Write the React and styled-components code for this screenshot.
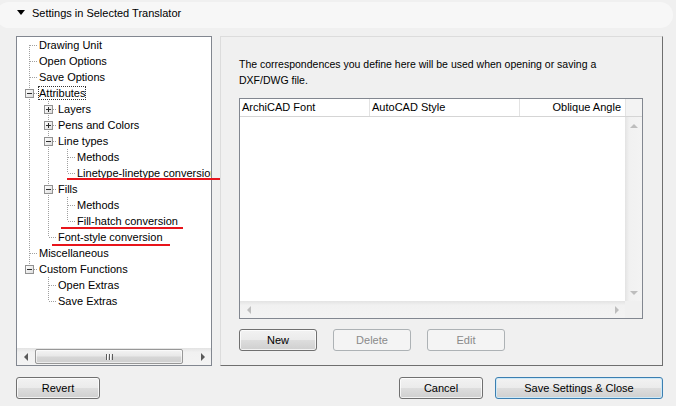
import styled, { createGlobalStyle, css } from "styled-components";

const GlobalStyle = createGlobalStyle`
  body {
    margin: 0;
    background: #f0f0f0;
    font-family: "Liberation Sans", Arial, sans-serif;
    font-size: 11px;
    color: #000;
  }
`;

const TREE = [
  { label: "Drawing Unit" },
  { label: "Open Options" },
  { label: "Save Options" },
  {
    label: "Attributes",
    focused: true,
    open: true,
    children: [
      { label: "Layers", collapsed: true },
      { label: "Pens and Colors", collapsed: true },
      {
        label: "Line types",
        open: true,
        children: [{ label: "Methods" }, { label: "Linetype-linetype conversion" }],
      },
      {
        label: "Fills",
        open: true,
        children: [{ label: "Methods" }, { label: "Fill-hatch conversion" }],
      },
      { label: "Font-style conversion" },
    ],
  },
  { label: "Miscellaneous" },
  {
    label: "Custom Functions",
    open: true,
    children: [{ label: "Open Extras" }, { label: "Save Extras" }],
  },
];

// red hand-drawn marks lying over the tree (coordinates inside Main)
const MARKS = [
  { left: 67, top: 142, width: 153 },
  { left: 61, top: 191, width: 122 },
  { left: 52, top: 208, width: 118 },
];

function flatten(nodes, guides = [], depth = 0, out = []) {
  nodes.forEach((node, i) => {
    const last = i === nodes.length - 1;
    out.push({ ...node, guides, depth, first: i === 0, last });
    if (node.children && node.open) {
      flatten(node.children, [...guides, !last], depth + 1, out);
    }
  });
  return out;
}

const dotV = css`
  background-image: linear-gradient(#a0a0a0 50%, transparent 50%);
  background-size: 1px 2px;
  background-repeat: repeat-y;
`;

const dotH = css`
  background-image: linear-gradient(to right, #a0a0a0 50%, transparent 50%);
  background-size: 2px 1px;
  background-repeat: repeat-x;
`;

const Dialog = styled.div`
  width: 676px;
  height: 406px;
  display: flex;
  flex-direction: column;
  overflow: hidden;
`;

const SectionBar = styled.div`
  margin: 2px 3px 0 -4px;
  height: 26px;
  border-radius: 13px;
  background: #f7f7f7;
  display: flex;
  align-items: flex-start;
  gap: 7px;
  padding: 4px 0 0 21px;
  box-sizing: border-box;
  line-height: 14px;
`;

const Caret = styled.span`
  margin-top: 4px;
  width: 0;
  height: 0;
  border-style: solid;
  border-width: 5px 4px 0 4px;
  border-color: #000 transparent transparent transparent;
`;

const Main = styled.div`
  position: relative;
  display: flex;
  gap: 8px;
  margin-top: 8px;
  padding-left: 16px;
`;

const Mark = styled.div`
  position: absolute;
  height: 2px;
  background: #e8141b;
  pointer-events: none;
`;

const TreePanel = styled.div`
  width: 196px;
  height: 330px;
  box-sizing: border-box;
  border: 1px solid #828790;
  background: #fff;
  display: flex;
  flex-direction: column;
`;

const TreeBody = styled.div`
  flex: 1;
  min-height: 0;
  overflow: hidden;
  padding-left: 3px;
`;

const Row = styled.div`
  display: flex;
  height: 16px;
  align-items: center;
  white-space: nowrap;
`;

const Guide = styled.span`
  flex: 0 0 19px;
  align-self: stretch;
  ${(p) => p.$line && dotV}
  background-position: 9px 0;
`;

const Connector = styled.span`
  position: relative;
  flex: 0 0 18px;
  align-self: stretch;

  &::before {
    content: "";
    position: absolute;
    left: 9px;
    width: 1px;
    top: ${(p) => (p.$first ? "8px" : "0")};
    bottom: ${(p) => (p.$last ? "8px" : "0")};
    ${dotV}
  }

  &::after {
    content: "";
    position: absolute;
    left: 10px;
    right: 0;
    top: 8px;
    height: 1px;
    ${dotH}
  }
`;

const Expander = styled.svg`
  position: absolute;
  left: 5px;
  top: 4px;
  z-index: 1;
`;

const Label = styled.span`
  padding: 0 1px;
  line-height: 14px;
  outline: ${(p) => (p.$focused ? "1px dotted #333" : "none")};
  outline-offset: -1px;
`;

const ScrollBar = styled.div`
  display: flex;
  flex-direction: ${(p) => (p.$vertical ? "column" : "row")};
  align-items: center;
  flex: ${(p) => (p.$grow ? "1 1 auto" : "0 0 auto")};
  ${(p) => (p.$vertical ? "width: 17px; align-self: stretch;" : "height: 17px;")}
  background: linear-gradient(
    ${(p) => (p.$vertical ? "to right" : "to bottom")},
    #e3e3e3,
    #f1f1f1 25%,
    #f3f3f3
  );
`;

const ArrowButton = styled.div`
  flex: 0 0 17px;
  width: 17px;
  height: 17px;
  display: flex;
  align-items: center;
  justify-content: center;
`;

const arrowShapes = {
  left: (c) => `border-width: 4px 4px 4px 0; border-color: transparent ${c} transparent transparent;`,
  right: (c) => `border-width: 4px 0 4px 4px; border-color: transparent transparent transparent ${c};`,
  up: (c) => `border-width: 0 4px 4px 4px; border-color: transparent transparent ${c} transparent;`,
  down: (c) => `border-width: 4px 4px 0 4px; border-color: ${c} transparent transparent transparent;`,
};

const Arrow = styled.span`
  width: 0;
  height: 0;
  border-style: solid;
  ${(p) => arrowShapes[p.$dir](p.$disabled ? "#bdbdbd" : "#5a5a5a")}
`;

const Spacer = styled.div`
  flex: 1;
`;

const Thumb = styled.div`
  flex: 0 0 148px;
  height: 15px;
  margin-left: 1px;
  box-sizing: border-box;
  border: 1px solid #979797;
  border-radius: 2px;
  background: linear-gradient(#f4f4f4, #e8e8e8 45%, #d6d6d6 55%, #cfcfcf);
  box-shadow: inset 0 0 0 1px rgba(255, 255, 255, 0.6);
  display: flex;
  align-items: center;
  justify-content: center;
`;

const Grip = styled.span`
  width: 7px;
  height: 6px;
  background: repeating-linear-gradient(to right, #5c5c5c 0 1px, #fafafa 1px 2px, transparent 2px 3px);
`;

const GroupBox = styled.div`
  width: 443px;
  height: 330px;
  box-sizing: border-box;
  border: 1px solid;
  border-color: #dcdcdc #6f6f6f #6f6f6f #dcdcdc;
  padding: 19px 0 0 18px;
  display: flex;
  flex-direction: column;
`;

const Description = styled.p`
  margin: 0;
  width: 400px;
  font-size: 10.5px;
  line-height: 16px;
`;

const Table = styled.div`
  margin-top: 10px;
  width: 404px;
  height: 221px;
  box-sizing: border-box;
  border: 1px solid #828790;
  background: #fff;
  display: flex;
  flex-direction: column;
`;

const Header = styled.div`
  display: flex;
  height: 18px;
  box-sizing: border-box;
  border-bottom: 1px solid #d5d5d5;
  flex-shrink: 0;
`;

const HeaderCell = styled.div`
  flex: 0 0 ${(p) => p.$w}px;
  box-sizing: border-box;
  border-right: 1px solid #e3e3e3;
  padding: 0 4px 0 2px;
  line-height: 17px;
  text-align: ${(p) => (p.$right ? "right" : "left")};
  white-space: nowrap;
`;

const HeaderFill = styled.div`
  flex: 1;
  background: #f3f3f3;
`;

const ListArea = styled.div`
  flex: 1;
  display: flex;
`;

const ListBody = styled.div`
  flex: 1;
  background: #fff;
`;

const BottomStrip = styled.div`
  display: flex;
`;

const Corner = styled.div`
  flex: 0 0 17px;
  height: 17px;
  background: #f0f0f0;
`;

const ButtonRow = styled.div`
  display: flex;
  gap: 16px;
  margin-top: 10px;
`;

const Button = styled.button`
  width: ${(p) => p.$w}px;
  height: 22px;
  padding: 0;
  font: 11px "Liberation Sans", Arial, sans-serif;
  color: #000;
  border: 1px solid ${(p) => (p.$default ? "#3c7fb1" : "#707070")};
  border-radius: 3px;
  background: linear-gradient(#f2f2f2, #ebebeb 48%, #dddddd 52%, #cfcfcf);
  box-shadow: inset 0 0 0 1px ${(p) => (p.$default ? "#cde9f8" : "rgba(255,255,255,0.75)")};

  &:disabled {
    border-color: #adb2b5;
    background: #f4f4f4;
    box-shadow: none;
    color: #8a8a8a;
  }
`;

const Footer = styled.div`
  display: flex;
  align-items: center;
  margin-top: 11px;
  padding: 0 13px 0 16px;
  gap: 12px;
`;

const HScroll = ({ disabled, thumb, grow }) => (
  <ScrollBar $grow={grow}>
    <ArrowButton>
      <Arrow $dir="left" $disabled={disabled} />
    </ArrowButton>
    {thumb && (
      <Thumb>
        <Grip />
      </Thumb>
    )}
    <Spacer />
    <ArrowButton>
      <Arrow $dir="right" $disabled={disabled} />
    </ArrowButton>
  </ScrollBar>
);

const VScroll = () => (
  <ScrollBar $vertical>
    <ArrowButton>
      <Arrow $dir="up" $disabled />
    </ArrowButton>
    <Spacer />
    <ArrowButton>
      <Arrow $dir="down" $disabled />
    </ArrowButton>
  </ScrollBar>
);

function ExpanderBox({ open }) {
  return (
    <Expander width="9" height="9" viewBox="0 0 9 9">
      <defs>
        <linearGradient id="exp" x1="0" y1="0" x2="1" y2="1">
          <stop offset="0" stopColor="#ffffff" />
          <stop offset="1" stopColor="#dcdcdc" />
        </linearGradient>
      </defs>
      <rect x="0.5" y="0.5" width="8" height="8" fill="url(#exp)" stroke="#919191" />
      <line x1="2" y1="4.5" x2="7" y2="4.5" stroke="#2d2d2d" />
      {!open && <line x1="4.5" y1="2" x2="4.5" y2="7" stroke="#2d2d2d" />}
    </Expander>
  );
}

function Tree() {
  const rows = flatten(TREE);
  return (
    <TreePanel>
      <TreeBody>
        {rows.map((r, i) => (
          <Row key={i}>
            {r.guides.map((g, j) => (
              <Guide key={j} $line={g} />
            ))}
            <Connector $first={r.first && r.depth === 0} $last={r.last}>
              {(r.children || r.collapsed) && <ExpanderBox open={r.open} />}
            </Connector>
            <Label $focused={r.focused}>{r.label}</Label>
          </Row>
        ))}
      </TreeBody>
      <HScroll thumb />
    </TreePanel>
  );
}

export default function App() {
  return (
    <>
      <GlobalStyle />
      <Dialog>
        <SectionBar>
          <Caret />
          <span>Settings in Selected Translator</span>
        </SectionBar>

        <Main>
          <Tree />
          <GroupBox>
            <Description>
              The correspondences you define here will be used when opening or saving a
              <br />
              DXF/DWG file.
            </Description>
            <Table>
              <Header>
                <HeaderCell $w={130}>ArchiCAD Font</HeaderCell>
                <HeaderCell $w={150}>AutoCAD Style</HeaderCell>
                <HeaderCell $w={106} $right>
                  Oblique Angle
                </HeaderCell>
                <HeaderFill />
              </Header>
              <ListArea>
                <ListBody />
                <VScroll />
              </ListArea>
              <BottomStrip>
                <HScroll disabled grow />
                <Corner />
              </BottomStrip>
            </Table>
            <ButtonRow>
              <Button $w={78}>New</Button>
              <Button $w={78} disabled>
                Delete
              </Button>
              <Button $w={78} disabled>
                Edit
              </Button>
            </ButtonRow>
          </GroupBox>
          {MARKS.map((m, i) => (
            <Mark key={i} style={{ left: m.left, top: m.top, width: m.width }} />
          ))}
        </Main>

        <Footer>
          <Button $w={84}>Revert</Button>
          <Spacer />
          <Button $w={84}>Cancel</Button>
          <Button $w={168} $default>
            Save Settings &amp; Close
          </Button>
        </Footer>
      </Dialog>
    </>
  );
}
